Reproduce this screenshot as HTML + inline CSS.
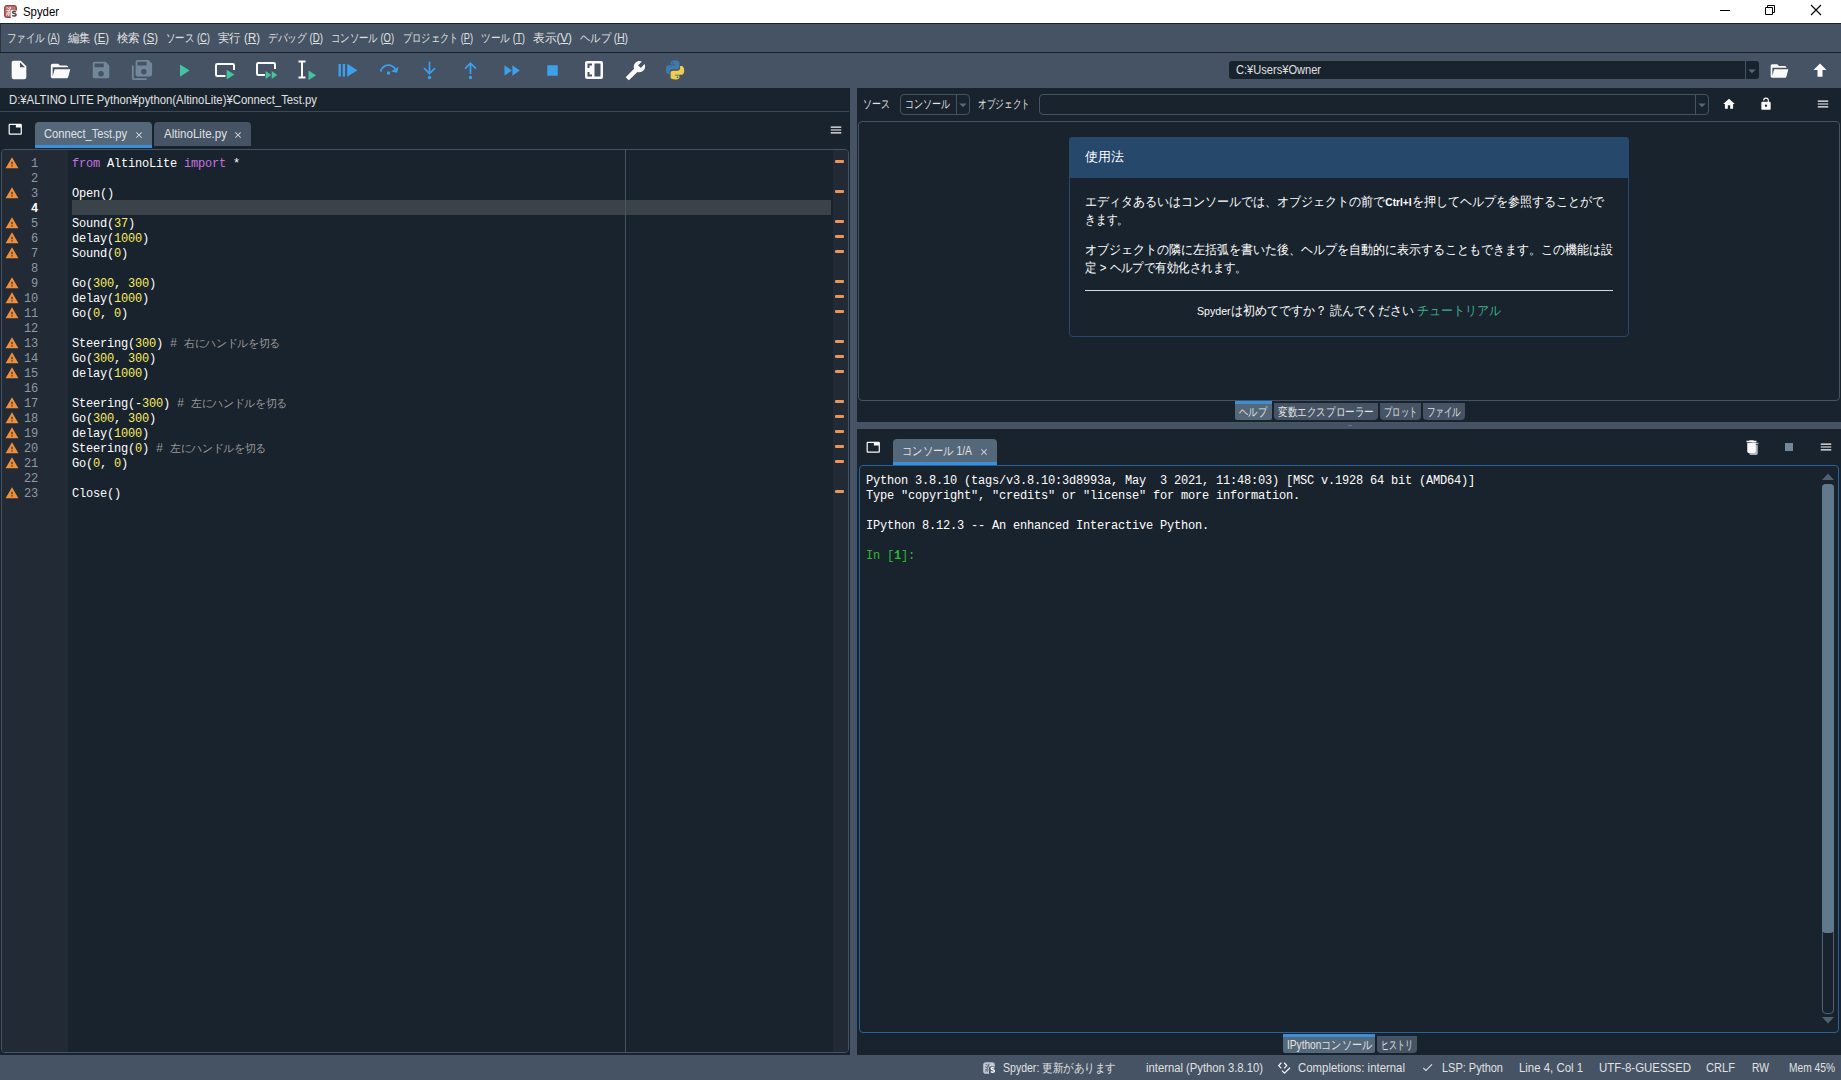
<!DOCTYPE html>
<html lang="ja"><head><meta charset="utf-8"><title>Spyder</title>
<style>
html,body{margin:0;padding:0}
body{width:1841px;height:1080px;overflow:hidden;position:relative;background:#19232D;font-family:"Liberation Sans",sans-serif;font-size:12px;color:#E0E1E3}
div,span{box-sizing:border-box}
.a{position:absolute}
.t{position:absolute;white-space:nowrap;line-height:16px;height:16px;transform-origin:0 50%}
.mono{font-family:"Liberation Mono",monospace}
.code{position:absolute;white-space:pre;font-family:"Liberation Mono",monospace;font-size:12px;letter-spacing:-0.2px;line-height:15px;height:15px;color:#fff}
.k{color:#C670E0}.n{color:#FAED5C}.cm{color:#999999}.c{color:#999999;font-family:"Liberation Sans",sans-serif;font-size:11px;letter-spacing:-0.35px;line-height:0}
.ln{position:absolute;left:2px;width:36px;text-align:right;font-family:"Liberation Mono",monospace;font-size:12px;letter-spacing:-0.2px;line-height:15px;height:15px;color:#8F99A3}
.u{text-decoration:underline}
</style></head><body>

<div class="a" style="left:0;top:0;width:1841px;height:23px;background:#fff"></div>
<svg style="position:absolute;left:4px;top:5px" width="13" height="13" viewBox="0 0 13 13" ><rect x="0.7" y="0.7" width="11.600" height="11.600" rx="2.400" fill="#BD7474" stroke="#974545" stroke-width="1.300"/><path d="M2.6 2.2l2 1.300 2.400-1.500M2.300 5.200l2 .8L6.800 3M2.400 8.300l2-.6 1.400-3.200M4.400 11l1.200-3.700M2 10.400l2.600-2.400" stroke="#FBEFEF" stroke-width="0.9" fill="none"/><rect x="6.6" y="5.200" width="6.4" height="7.800" rx="1" fill="#fff"/><path d="M11.900 6.900c-1-.9-3.400-.7-3.300.6.100 1.400 3.500.7 3.500 2.300 0 1.500-2.800 1.600-3.800.5" stroke="#454545" stroke-width="1.500" fill="none"/></svg>
<div class="t" style="transform:scaleX(0.947);left:23px;top:4px;font-size:12px;color:#000">Spyder</div>
<svg style="position:absolute;left:1717px;top:2px" width="16" height="16" viewBox="0 0 16 16" ><path d="M3 8.5h10" stroke="#000" stroke-width="1"/></svg>
<svg style="position:absolute;left:1762px;top:2px" width="16" height="16" viewBox="0 0 16 16" ><path d="M3.500 5.500h7v7h-7z M5.500 5.500v-2h7v7h-2" stroke="#000" stroke-width="1" fill="none"/></svg>
<svg style="position:absolute;left:1808px;top:2px" width="16" height="16" viewBox="0 0 16 16" ><path d="M3 3l10 10M13 3L3 13" stroke="#000" stroke-width="1.1"/></svg>
<div class="a" style="left:0;top:24px;width:1841px;height:28px;background:#455364"></div>
<div class="a" style="left:0;top:24px;width:1px;height:28px;background:#2B3643"></div>
<div class="t" style="transform:scaleX(0.787);left:7px;top:30px">ファイル (<span class="u">A</span>)</div>
<div class="t" style="transform:scaleX(0.946);left:68px;top:30px">編集 (<span class="u">E</span>)</div>
<div class="t" style="transform:scaleX(0.946);left:117px;top:30px">検索 (<span class="u">S</span>)</div>
<div class="t" style="transform:scaleX(0.785);left:166px;top:30px">ソース (<span class="u">C</span>)</div>
<div class="t" style="transform:scaleX(0.954);left:218px;top:30px">実行 (<span class="u">R</span>)</div>
<div class="t" style="transform:scaleX(0.809);left:268px;top:30px">デバッグ (<span class="u">D</span>)</div>
<div class="t" style="transform:scaleX(0.781);left:331px;top:30px">コンソール (<span class="u">O</span>)</div>
<div class="t" style="transform:scaleX(0.766);left:403px;top:30px">プロジェクト (<span class="u">P</span>)</div>
<div class="t" style="transform:scaleX(0.805);left:481px;top:30px">ツール (<span class="u">T</span>)</div>
<div class="t" style="transform:scaleX(0.975);left:533px;top:30px">表示(<span class="u">V</span>)</div>
<div class="t" style="transform:scaleX(0.857);left:580px;top:30px">ヘルプ (<span class="u">H</span>)</div>
<div class="a" style="left:0;top:53px;width:1841px;height:35px;background:#455364"></div>
<svg style="position:absolute;left:8.0px;top:59.0px" width="22" height="22" viewBox="0 0 24 24" ><path fill="#FAFAFA" d="M13,9V3.5L18.5,9M6,2C4.89,2 4,2.89 4,4V20A2,2 0 0,0 6,22H18A2,2 0 0,0 20,20V8L14,2H6Z"/></svg>
<svg style="position:absolute;left:49.0px;top:59.5px" width="22" height="22" viewBox="0 0 24 24" ><path fill="#FAFAFA" d="M19,20H4C2.89,20 2,19.1 2,18V6C2,4.89 2.89,4 4,4H10L12,6H19A2,2 0 0,1 21,8H21L4,8V18L6.14,10H23.21L20.93,18.5C20.7,19.37 19.92,20 19,20Z"/></svg>
<svg style="position:absolute;left:90.0px;top:59.0px" width="22" height="22" viewBox="0 0 24 24" ><path fill="#73879B" d="M15,9H5V5H15M12,19A3,3 0 0,1 9,16A3,3 0 0,1 12,13A3,3 0 0,1 15,16A3,3 0 0,1 12,19M17,3H5C3.89,3 3,3.9 3,5V19A2,2 0 0,0 5,21H19A2,2 0 0,0 21,19V7L17,3Z"/></svg>
<svg style="position:absolute;left:131.0px;top:59.0px" width="22" height="22" viewBox="0 0 24 24" ><path fill="#73879B" d="M17,7V3H7V7H17M14,17A3,3 0 0,0 17,14A3,3 0 0,0 14,11A3,3 0 0,0 11,14A3,3 0 0,0 14,17M19,1L23,5V17A2,2 0 0,1 21,19H7C5.89,19 5,18.1 5,17V3A2,2 0 0,1 7,1H19M1,7H3V21H17V23H3A2,2 0 0,1 1,21V7Z"/></svg>
<svg style="position:absolute;left:172.8px;top:59.7px" width="21" height="21" viewBox="0 0 24 24" ><path fill="#44C3A1" d="M8,5.14V19.14L19,12.14L8,5.14Z"/></svg>
<svg style="position:absolute;left:212px;top:58px" width="24" height="24" viewBox="0 0 24 24" ><path d="M13.500 18H5.300a1.300 1.300 0 0 1-1.300-1.300V7.300A1.300 1.300 0 0 1 5.300 6H20.700A1.300 1.300 0 0 1 22 7.300V12" stroke="#FAFAFA" stroke-width="2" fill="none"/></svg>
<svg style="position:absolute;left:221.3px;top:66.4px" width="17" height="17" viewBox="0 0 24 24" ><path fill="#44C3A1" stroke="#455364" stroke-width="2.400" paint-order="stroke" d="M8,5.14V19.14L19,12.14L8,5.14Z"/></svg>
<svg style="position:absolute;left:253px;top:57px" width="24" height="24" viewBox="0 0 24 24" ><path d="M13.500 18H5.300a1.300 1.300 0 0 1-1.300-1.300V7.300A1.300 1.300 0 0 1 5.300 6H20.700A1.300 1.300 0 0 1 22 7.300V12" stroke="#FAFAFA" stroke-width="2" fill="none"/></svg>
<svg style="position:absolute;left:262.8px;top:67.4px" width="16" height="16" viewBox="0 0 24 24" ><path fill="#44C3A1" stroke="#455364" stroke-width="2.400" paint-order="stroke" d="M13,6V18L21.5,12M4,18L12.5,12L4,6V18Z"/></svg>
<svg style="position:absolute;left:294px;top:58px" width="24" height="24" viewBox="0 0 24 24" ><path d="M4.500 3.500h7M4.500 19.500h7M8 3.500v16" stroke="#FAFAFA" stroke-width="2" fill="none"/></svg>
<svg style="position:absolute;left:302.5px;top:67px" width="16.5" height="16.5" viewBox="0 0 24 24" ><path fill="#44C3A1" d="M8,5.14V19.14L19,12.14L8,5.14Z"/></svg>
<svg style="position:absolute;left:336px;top:58px" width="24" height="24" viewBox="0 0 24 24" ><path fill="#3EA0EA" d="M2.500 6h2.400v12.500h-2.400zM6.700 6h2.400v12.500h-2.400zM11.200 5.800V18.700L21.500 12.250z"/></svg>
<svg style="position:absolute;left:378.0px;top:58.5px" width="21" height="21" viewBox="0 0 24 24" ><path fill="#3EA0EA" d="M12,14A2,2 0 0,1 14,16A2,2 0 0,1 12,18A2,2 0 0,1 10,16A2,2 0 0,1 12,14M23.46,8.86L21.87,15.75L15,14.16L18.8,11.78C17.39,9.5 14.87,8 12,8C8.05,8 4.77,10.86 4.12,14.63L2.15,14.28C2.96,9.58 7.06,6 12,6C15.58,6 18.73,7.89 20.5,10.72L23.46,8.86Z"/></svg>
<svg style="position:absolute;left:418.5px;top:59.5px" width="21" height="21" viewBox="0 0 24 24" ><path fill="#3EA0EA" d="M12,22A2,2 0 0,1 10,20A2,2 0 0,1 12,18A2,2 0 0,1 14,20A2,2 0 0,1 12,22M13,2V13L17.5,8.5L18.92,9.92L12,16.84L5.08,9.92L6.5,8.5L11,13V2H13Z"/></svg>
<svg style="position:absolute;left:459.5px;top:59.5px" width="21" height="21" viewBox="0 0 24 24" ><path fill="#3EA0EA" d="M12,22A2,2 0 0,1 10,20A2,2 0 0,1 12,18A2,2 0 0,1 14,20A2,2 0 0,1 12,22M13,16H11V6L6.5,10.5L5.08,9.08L12,2.16L18.92,9.08L17.5,10.5L13,6V16Z"/></svg>
<svg style="position:absolute;left:500.5px;top:59.5px" width="21" height="21" viewBox="0 0 24 24" ><path fill="#3EA0EA" d="M13,6V18L21.5,12M4,18L12.5,12L4,6V18Z"/></svg>
<svg style="position:absolute;left:541.5px;top:59.5px" width="21" height="21" viewBox="0 0 24 24" ><path fill="#3EA0EA" d="M18,18H6V6H18V18Z"/></svg>
<svg style="position:absolute;left:584px;top:60px" width="20" height="20" viewBox="0 0 20 20" ><rect x="1" y="1" width="18" height="18" rx="2" fill="#FAFAFA"/><rect x="10.500" y="3.500" width="6" height="13" fill="#455364"/><path d="M8 4.500H4.500V8M4.500 12v3.500H8" stroke="#455364" stroke-width="2" fill="none"/></svg>
<svg style="position:absolute;left:624.5px;top:59.5px" width="21" height="21" viewBox="0 0 24 24" ><path transform="translate(24 0) scale(-1 1)" fill="#FAFAFA" d="M22.7,19L13.6,9.9C14.5,7.6 14,4.9 12.1,3C10.1,1 7.1,0.6 4.7,1.7L9,6L6,9L1.6,4.7C0.4,7.1 0.9,10.1 2.9,12.1C4.8,14 7.5,14.5 9.8,13.6L18.9,22.7C19.3,23.1 19.9,23.1 20.3,22.7L22.6,20.4C23.1,20 23.1,19.3 22.7,19Z"/></svg>
<svg style="position:absolute;left:664px;top:59px" width="22" height="22" viewBox="0 0 22 22" ><path fill="#3F7BAA" d="M10.900 1.500c-4.600 0-4.300 2-4.300 2v2.100h4.400v.6H4.800S1.800 5.900 1.800 10.600s2.600 4.500 2.600 4.500h1.500v-2.200s-.1-2.600 2.600-2.600h4.400s2.500 0 2.500-2.400V3.900s.4-2.400-4.500-2.400zM8.500 2.900a.8.800 0 1 1 0 1.600.8.800 0 0 1 0-1.600z"/><path fill="#EFCB4E" d="M11.100 20.500c4.600 0 4.300-2 4.300-2v-2.100H11v-.6h6.200s3 .3 3-4.400-2.600-4.500-2.600-4.500h-1.500v2.200s.1 2.600-2.600 2.600H9.100s-2.500 0-2.500 2.400v4s-.4 2.400 4.500 2.400zm2.400-1.400a.8.800 0 1 1 0-1.600.8.800 0 0 1 0 1.600z"/></svg>
<div class="a" style="left:1229px;top:61px;width:530px;height:18px;background:#19232D;border-radius:3px"></div>
<div class="a" style="left:1745px;top:61px;width:1px;height:18px;background:#455364"></div>
<svg style="position:absolute;left:1743.0px;top:61.5px" width="18" height="18" viewBox="0 0 24 24" ><path fill="#54687A" d="M7,10L12,15L17,10H7Z"/></svg>
<div class="t" style="transform:scaleX(0.924);left:1236px;top:62px">C:¥Users¥Owner</div>
<svg style="position:absolute;left:1769.0px;top:60.5px" width="20" height="20" viewBox="0 0 24 24" ><path fill="#FAFAFA" d="M19,20H4C2.89,20 2,19.1 2,18V6C2,4.89 2.89,4 4,4H10L12,6H19A2,2 0 0,1 21,8H21L4,8V18L6.14,10H23.21L20.93,18.5C20.7,19.37 19.92,20 19,20Z"/></svg>
<svg style="position:absolute;left:1809.5px;top:60.0px" width="20" height="20" viewBox="0 0 24 24" ><path fill="#FAFAFA" d="M15,20H9V12H4.16L12,4.16L19.84,12H15V20Z"/></svg>
<div class="t" style="transform:scaleX(0.943);left:9px;top:92px">D:¥ALTINO LITE Python¥python(AltinoLite)¥Connect_Test.py</div>
<div class="a" style="left:0;top:111px;width:849px;height:1px;background:#3C4856"></div>
<svg style="position:absolute;left:8.25px;top:122.25px" width="14.5" height="14.5" viewBox="0 0 24 24" ><path fill="#FAFAFA" d="M21,3H3A2,2 0 0,0 1,5V19A2,2 0 0,0 3,21H21A2,2 0 0,0 23,19V5A2,2 0 0,0 21,3M21,19H3V5H13V9H21V19Z"/></svg>
<div class="a" style="left:35px;top:122px;width:117px;height:26px;background:#54687A;border-radius:4px 4px 0 0;border-bottom:3px solid #3A8FD6"></div>
<div class="t" style="transform:scaleX(0.929);left:44px;top:126px">Connect_Test.py</div>
<svg style="position:absolute;left:133.5px;top:129.5px" width="10" height="10" viewBox="0 0 24 24" ><path fill="#E0E1E3" d="M19,6.41L17.59,5L12,10.59L6.41,5L5,6.41L10.59,12L5,17.59L6.41,19L12,13.41L17.59,19L19,17.59L13.41,12L19,6.41Z"/></svg>
<div class="a" style="left:154px;top:122px;width:97px;height:24px;background:#455364;border-radius:4px 4px 0 0"></div>
<div class="t" style="transform:scaleX(0.964);left:164px;top:126px">AltinoLite.py</div>
<svg style="position:absolute;left:232.5px;top:129.5px" width="10" height="10" viewBox="0 0 24 24" ><path fill="#E0E1E3" d="M19,6.41L17.59,5L12,10.59L6.41,5L5,6.41L10.59,12L5,17.59L6.41,19L12,13.41L17.59,19L19,17.59L13.41,12L19,6.41Z"/></svg>
<svg style="position:absolute;left:828.5px;top:122.5px" width="14" height="14" viewBox="0 0 24 24" ><path fill="#FAFAFA" d="M3,6H21V8H3V6M3,11H21V13H3V11M3,16H21V18H3V16Z"/></svg>
<div class="a" style="left:1px;top:149px;width:848px;height:904px;border:1px solid #455364;border-radius:4px;background:#19232D"></div>
<div class="a" style="left:2px;top:150px;width:66px;height:902px;background:#222B35;border-radius:3px 0 0 3px"></div>
<div class="a" style="left:833px;top:150px;width:15px;height:902px;background:#222B35;border-radius:0 3px 3px 0"></div>
<div class="a" style="left:72px;top:200px;width:759px;height:15px;background:#3A424A"></div>
<div class="a" style="left:625px;top:150px;width:1px;height:902px;background:#465363"></div>
<div class="ln" style="top:157px">1</div>
<svg style="position:absolute;left:5.0px;top:155.5px" width="14" height="14" viewBox="0 0 24 24" ><path fill="#EE8E3B" d="M13,14H11V10H13M13,18H11V16H13M1,21H23L12,2L1,21Z"/></svg>
<div class="code" style="left:72px;top:157px"><span class="k">from</span> AltinoLite <span class="k">import</span> *</div>
<div class="a" style="left:835px;top:160px;width:9px;height:3px;background:#E8945A;border-radius:1px"></div>
<div class="ln" style="top:172px">2</div>
<div class="ln" style="top:187px">3</div>
<svg style="position:absolute;left:5.0px;top:185.5px" width="14" height="14" viewBox="0 0 24 24" ><path fill="#EE8E3B" d="M13,14H11V10H13M13,18H11V16H13M1,21H23L12,2L1,21Z"/></svg>
<div class="code" style="left:72px;top:187px">Open()</div>
<div class="a" style="left:835px;top:190px;width:9px;height:3px;background:#E8945A;border-radius:1px"></div>
<div class="ln" style="top:202px;color:#fff;font-weight:bold">4</div>
<div class="ln" style="top:217px">5</div>
<svg style="position:absolute;left:5.0px;top:215.5px" width="14" height="14" viewBox="0 0 24 24" ><path fill="#EE8E3B" d="M13,14H11V10H13M13,18H11V16H13M1,21H23L12,2L1,21Z"/></svg>
<div class="code" style="left:72px;top:217px">Sound(<span class="n">37</span>)</div>
<div class="a" style="left:835px;top:220px;width:9px;height:3px;background:#E8945A;border-radius:1px"></div>
<div class="ln" style="top:232px">6</div>
<svg style="position:absolute;left:5.0px;top:230.5px" width="14" height="14" viewBox="0 0 24 24" ><path fill="#EE8E3B" d="M13,14H11V10H13M13,18H11V16H13M1,21H23L12,2L1,21Z"/></svg>
<div class="code" style="left:72px;top:232px">delay(<span class="n">1000</span>)</div>
<div class="a" style="left:835px;top:235px;width:9px;height:3px;background:#E8945A;border-radius:1px"></div>
<div class="ln" style="top:247px">7</div>
<svg style="position:absolute;left:5.0px;top:245.5px" width="14" height="14" viewBox="0 0 24 24" ><path fill="#EE8E3B" d="M13,14H11V10H13M13,18H11V16H13M1,21H23L12,2L1,21Z"/></svg>
<div class="code" style="left:72px;top:247px">Sound(<span class="n">0</span>)</div>
<div class="a" style="left:835px;top:250px;width:9px;height:3px;background:#E8945A;border-radius:1px"></div>
<div class="ln" style="top:262px">8</div>
<div class="ln" style="top:277px">9</div>
<svg style="position:absolute;left:5.0px;top:275.5px" width="14" height="14" viewBox="0 0 24 24" ><path fill="#EE8E3B" d="M13,14H11V10H13M13,18H11V16H13M1,21H23L12,2L1,21Z"/></svg>
<div class="code" style="left:72px;top:277px">Go(<span class="n">300</span>, <span class="n">300</span>)</div>
<div class="a" style="left:835px;top:280px;width:9px;height:3px;background:#E8945A;border-radius:1px"></div>
<div class="ln" style="top:292px">10</div>
<svg style="position:absolute;left:5.0px;top:290.5px" width="14" height="14" viewBox="0 0 24 24" ><path fill="#EE8E3B" d="M13,14H11V10H13M13,18H11V16H13M1,21H23L12,2L1,21Z"/></svg>
<div class="code" style="left:72px;top:292px">delay(<span class="n">1000</span>)</div>
<div class="a" style="left:835px;top:295px;width:9px;height:3px;background:#E8945A;border-radius:1px"></div>
<div class="ln" style="top:307px">11</div>
<svg style="position:absolute;left:5.0px;top:305.5px" width="14" height="14" viewBox="0 0 24 24" ><path fill="#EE8E3B" d="M13,14H11V10H13M13,18H11V16H13M1,21H23L12,2L1,21Z"/></svg>
<div class="code" style="left:72px;top:307px">Go(<span class="n">0</span>, <span class="n">0</span>)</div>
<div class="a" style="left:835px;top:310px;width:9px;height:3px;background:#E8945A;border-radius:1px"></div>
<div class="ln" style="top:322px">12</div>
<div class="ln" style="top:337px">13</div>
<svg style="position:absolute;left:5.0px;top:335.5px" width="14" height="14" viewBox="0 0 24 24" ><path fill="#EE8E3B" d="M13,14H11V10H13M13,18H11V16H13M1,21H23L12,2L1,21Z"/></svg>
<div class="code" style="left:72px;top:337px">Steering(<span class="n">300</span>) <span class="cm"># </span><span class="c">右にハンドルを切る</span></div>
<div class="a" style="left:835px;top:340px;width:9px;height:3px;background:#E8945A;border-radius:1px"></div>
<div class="ln" style="top:352px">14</div>
<svg style="position:absolute;left:5.0px;top:350.5px" width="14" height="14" viewBox="0 0 24 24" ><path fill="#EE8E3B" d="M13,14H11V10H13M13,18H11V16H13M1,21H23L12,2L1,21Z"/></svg>
<div class="code" style="left:72px;top:352px">Go(<span class="n">300</span>, <span class="n">300</span>)</div>
<div class="a" style="left:835px;top:355px;width:9px;height:3px;background:#E8945A;border-radius:1px"></div>
<div class="ln" style="top:367px">15</div>
<svg style="position:absolute;left:5.0px;top:365.5px" width="14" height="14" viewBox="0 0 24 24" ><path fill="#EE8E3B" d="M13,14H11V10H13M13,18H11V16H13M1,21H23L12,2L1,21Z"/></svg>
<div class="code" style="left:72px;top:367px">delay(<span class="n">1000</span>)</div>
<div class="a" style="left:835px;top:370px;width:9px;height:3px;background:#E8945A;border-radius:1px"></div>
<div class="ln" style="top:382px">16</div>
<div class="ln" style="top:397px">17</div>
<svg style="position:absolute;left:5.0px;top:395.5px" width="14" height="14" viewBox="0 0 24 24" ><path fill="#EE8E3B" d="M13,14H11V10H13M13,18H11V16H13M1,21H23L12,2L1,21Z"/></svg>
<div class="code" style="left:72px;top:397px">Steering(-<span class="n">300</span>) <span class="cm"># </span><span class="c">左にハンドルを切る</span></div>
<div class="a" style="left:835px;top:400px;width:9px;height:3px;background:#E8945A;border-radius:1px"></div>
<div class="ln" style="top:412px">18</div>
<svg style="position:absolute;left:5.0px;top:410.5px" width="14" height="14" viewBox="0 0 24 24" ><path fill="#EE8E3B" d="M13,14H11V10H13M13,18H11V16H13M1,21H23L12,2L1,21Z"/></svg>
<div class="code" style="left:72px;top:412px">Go(<span class="n">300</span>, <span class="n">300</span>)</div>
<div class="a" style="left:835px;top:415px;width:9px;height:3px;background:#E8945A;border-radius:1px"></div>
<div class="ln" style="top:427px">19</div>
<svg style="position:absolute;left:5.0px;top:425.5px" width="14" height="14" viewBox="0 0 24 24" ><path fill="#EE8E3B" d="M13,14H11V10H13M13,18H11V16H13M1,21H23L12,2L1,21Z"/></svg>
<div class="code" style="left:72px;top:427px">delay(<span class="n">1000</span>)</div>
<div class="a" style="left:835px;top:430px;width:9px;height:3px;background:#E8945A;border-radius:1px"></div>
<div class="ln" style="top:442px">20</div>
<svg style="position:absolute;left:5.0px;top:440.5px" width="14" height="14" viewBox="0 0 24 24" ><path fill="#EE8E3B" d="M13,14H11V10H13M13,18H11V16H13M1,21H23L12,2L1,21Z"/></svg>
<div class="code" style="left:72px;top:442px">Steering(<span class="n">0</span>) <span class="cm"># </span><span class="c">左にハンドルを切る</span></div>
<div class="a" style="left:835px;top:445px;width:9px;height:3px;background:#E8945A;border-radius:1px"></div>
<div class="ln" style="top:457px">21</div>
<svg style="position:absolute;left:5.0px;top:455.5px" width="14" height="14" viewBox="0 0 24 24" ><path fill="#EE8E3B" d="M13,14H11V10H13M13,18H11V16H13M1,21H23L12,2L1,21Z"/></svg>
<div class="code" style="left:72px;top:457px">Go(<span class="n">0</span>, <span class="n">0</span>)</div>
<div class="a" style="left:835px;top:460px;width:9px;height:3px;background:#E8945A;border-radius:1px"></div>
<div class="ln" style="top:472px">22</div>
<div class="ln" style="top:487px">23</div>
<svg style="position:absolute;left:5.0px;top:485.5px" width="14" height="14" viewBox="0 0 24 24" ><path fill="#EE8E3B" d="M13,14H11V10H13M13,18H11V16H13M1,21H23L12,2L1,21Z"/></svg>
<div class="code" style="left:72px;top:487px">Close()</div>
<div class="a" style="left:835px;top:490px;width:9px;height:3px;background:#E8945A;border-radius:1px"></div>
<div class="a" style="left:850px;top:88px;width:7px;height:967px;background:#455364"></div>
<div class="a" style="left:857px;top:422px;width:984px;height:7px;background:#455364"></div>
<div class="a" style="left:1348px;top:425px;width:4px;height:1px;background:#60798B"></div>
<div class="t" style="transform:scaleX(0.750);left:863px;top:96px">ソース</div>
<div class="a" style="left:900px;top:94px;width:70px;height:21px;border:1px solid #455364;border-radius:4px"></div>
<div class="a" style="left:956px;top:95px;width:1px;height:19px;background:#455364"></div>
<div class="t" style="transform:scaleX(0.750);left:905px;top:96px">コンソール</div>
<svg style="position:absolute;left:954.0px;top:95.5px" width="18" height="18" viewBox="0 0 24 24" ><path fill="#54687A" d="M7,10L12,15L17,10H7Z"/></svg>
<div class="t" style="transform:scaleX(0.722);left:978px;top:96px">オブジェクト</div>
<div class="a" style="left:1039px;top:94px;width:670px;height:21px;border:1px solid #455364;border-radius:4px"></div>
<div class="a" style="left:1695px;top:95px;width:1px;height:19px;background:#455364"></div>
<svg style="position:absolute;left:1693.0px;top:95.5px" width="18" height="18" viewBox="0 0 24 24" ><path fill="#54687A" d="M7,10L12,15L17,10H7Z"/></svg>
<svg style="position:absolute;left:1722.0px;top:96.5px" width="14" height="14" viewBox="0 0 24 24" ><path fill="#FAFAFA" d="M10,20V14H14V20H19V12H22L12,3L2,12H5V20H10Z"/></svg>
<svg style="position:absolute;left:1759.0px;top:96.5px" width="14" height="14" viewBox="0 0 24 24" ><path fill="#FAFAFA" d="M18,8A2,2 0 0,1 20,10V20A2,2 0 0,1 18,22H6C4.89,22 4,21.1 4,20V10A2,2 0 0,1 6,8H15V6A3,3 0 0,0 12,3A3,3 0 0,0 9,6H7A5,5 0 0,1 12,1A5,5 0 0,1 17,6V8H18M12,17A2,2 0 0,0 14,15A2,2 0 0,0 12,13A2,2 0 0,0 10,15A2,2 0 0,0 12,17Z"/></svg>
<svg style="position:absolute;left:1816.0px;top:96.5px" width="14" height="14" viewBox="0 0 24 24" ><path fill="#FAFAFA" d="M3,6H21V8H3V6M3,11H21V13H3V11M3,16H21V18H3V16Z"/></svg>
<div class="a" style="left:858px;top:121px;width:982px;height:280px;border:1px solid #455364;border-radius:4px"></div>
<div class="a" style="left:1069px;top:137px;width:560px;height:200px;border:1px solid #26486B;border-radius:4px;background:#19232D"></div>
<div class="a" style="left:1069px;top:137px;width:560px;height:41px;background:#26486B;border-radius:4px 4px 0 0"></div>
<div class="t" style="transform:scaleX(1.000);left:1085px;top:149px;font-size:13px;color:#fff">使用法</div>
<div class="t" style="transform:scaleX(0.924);left:1085px;top:194px;font-size:13px;color:#fff">エディタあるいはコンソールでは、オブジェクトの前で<b style="font-size:11px">Ctrl+I</b>を押してヘルプを参照することがで</div>
<div class="t" style="transform:scaleX(0.827);left:1085px;top:212px;font-size:13px;color:#fff">きます。</div>
<div class="t" style="transform:scaleX(0.923);left:1085px;top:242px;font-size:13px;color:#fff">オブジェクトの隣に左括弧を書いた後、ヘルプを自動的に表示することもできます。この機能は設</div>
<div class="t" style="transform:scaleX(0.881);left:1085px;top:260px;font-size:13px;color:#fff">定 &gt; ヘルプで有効化されます。</div>
<div class="a" style="left:1085px;top:290px;width:528px;height:1px;background:#D6DADE"></div>
<div class="t" style="transform:scaleX(0.923);left:1197px;top:303px;font-size:12.500px;color:#fff"><span style="font-size:11.500px">Spyder</span>は初めてですか？ 読んでください <span style="color:#3DB08A">チュートリアル</span></div>
<div class="a" style="left:1235px;top:400.5px;width:37px;height:19.5px;background:#54687A;border-top:3px solid #3A8FD6;border-radius:0 0 2px 2px"></div>
<div class="t" style="transform:scaleX(0.778);left:1239px;top:404px">ヘルプ</div>
<div class="a" style="left:1274px;top:403px;width:104px;height:17px;background:#455364;border-radius:0 0 4px 4px"></div>
<div class="t" style="transform:scaleX(0.800);left:1278px;top:404px">変数エクスプローラー</div>
<div class="a" style="left:1380px;top:403px;width:41px;height:17px;background:#455364;border-radius:0 0 4px 4px"></div>
<div class="t" style="transform:scaleX(0.688);left:1384px;top:404px">プロット</div>
<div class="a" style="left:1423px;top:403px;width:42px;height:17px;background:#455364;border-radius:0 0 4px 4px"></div>
<div class="t" style="transform:scaleX(0.708);left:1427px;top:404px">ファイル</div>
<svg style="position:absolute;left:866.25px;top:440.25px" width="14.5" height="14.5" viewBox="0 0 24 24" ><path fill="#FAFAFA" d="M21,3H3A2,2 0 0,0 1,5V19A2,2 0 0,0 3,21H21A2,2 0 0,0 23,19V5A2,2 0 0,0 21,3M21,19H3V5H13V9H21V19Z"/></svg>
<div class="a" style="left:893px;top:439px;width:104px;height:26px;background:#54687A;border-radius:4px 4px 0 0;border-bottom:3px solid #3A8FD6"></div>
<div class="t" style="transform:scaleX(0.860);left:902px;top:443px">コンソール 1/A</div>
<svg style="position:absolute;left:979.0px;top:446.5px" width="10" height="10" viewBox="0 0 24 24" ><path fill="#E0E1E3" d="M19,6.41L17.59,5L12,10.59L6.41,5L5,6.41L10.59,12L5,17.59L6.41,19L12,13.41L17.59,19L19,17.59L13.41,12L19,6.41Z"/></svg>
<svg style="position:absolute;left:1744.5px;top:439.5px" width="17" height="17" viewBox="0 0 24 24" ><path fill="#AEB6BF" d="M19,4H15.5L14.5,3H9.5L8.5,4H5V6H19M6,19A2,2 0 0,0 8,21H16A2,2 0 0,0 18,19V7H6V19Z"/></svg>
<svg style="position:absolute;left:1743.0px;top:438.0px" width="17" height="17" viewBox="0 0 24 24" ><path fill="#FAFAFA" d="M19,4H15.5L14.5,3H9.5L8.5,4H5V6H19M6,19A2,2 0 0,0 8,21H16A2,2 0 0,0 18,19V7H6V19Z"/></svg>
<div class="a" style="left:1785px;top:443px;width:8px;height:8px;background:#73879B"></div>
<svg style="position:absolute;left:1819.0px;top:440.0px" width="14" height="14" viewBox="0 0 24 24" ><path fill="#FAFAFA" d="M3,6H21V8H3V6M3,11H21V13H3V11M3,16H21V18H3V16Z"/></svg>
<div class="a" style="left:859px;top:465px;width:980px;height:568px;border:1px solid #25639A;border-radius:4px"></div>
<div class="code" style="left:866px;top:474px;color:#fff">Python 3.8.10 (tags/v3.8.10:3d8993a, May  3 2021, 11:48:03) [MSC v.1928 64 bit (AMD64)]</div>
<div class="code" style="left:866px;top:489px;color:#fff">Type "copyright", "credits" or "license" for more information.</div>
<div class="code" style="left:866px;top:519px;color:#fff">IPython 8.12.3 -- An enhanced Interactive Python.</div>
<div class="code" style="left:866px;top:549px;color:#fff"><span style="color:#2FB62F">In [<b>1</b>]:</span></div>
<svg style="position:absolute;left:1822px;top:473px" width="12" height="7" viewBox="0 0 12 7" ><path d="M0 7L6 0.500 12 7z" fill="#4F6072"/></svg>
<div class="a" style="left:1822px;top:484px;width:12px;height:530px;border:1px solid #506073;border-radius:4px"></div>
<div class="a" style="left:1822px;top:484px;width:12px;height:449px;background:#60798B;border-radius:4px"></div>
<svg style="position:absolute;left:1822px;top:1017px" width="12" height="7" viewBox="0 0 12 7" ><path d="M0 0L6 6.500 12 0z" fill="#4F6072"/></svg>
<div class="a" style="left:1283px;top:1034px;width:92px;height:19px;background:#54687A;border-top:3px solid #3A8FD6;border-radius:0 0 2px 2px"></div>
<div class="t" style="transform:scaleX(0.844);left:1287px;top:1037px">IPythonコンソール</div>
<div class="a" style="left:1377px;top:1036px;width:40px;height:17px;background:#455364;border-radius:0 0 4px 4px"></div>
<div class="t" style="transform:scaleX(0.667);left:1381px;top:1037px">ヒストリ</div>
<div class="a" style="left:0;top:1055px;width:1841px;height:25px;background:#455364"></div>
<svg style="position:absolute;left:983px;top:1062px" width="12" height="12" viewBox="0 0 12 12" ><rect x="0.2" y="0.2" width="11.600" height="11.600" rx="2.600" fill="#C3C9D1"/><path d="M2.400 2l1.900 1.200 2.200-1.400M2.100 4.800l1.900.7L6.300 2.800M2.200 7.700l1.900-.6 1.300-3M4.100 10.200l1.100-3.400M1.900 9.700l2.400-2.300" stroke="#56657A" stroke-width="0.900" fill="none"/><rect x="6" y="4.600" width="6" height="7.400" rx="1" fill="#455364"/><path d="M11.200 6.300c-.9-.8-3.200-.7-3.100.5.100 1.300 3.300.7 3.300 2.200 0 1.400-2.600 1.500-3.600.5" stroke="#F2F3F5" stroke-width="1.500" fill="none"/></svg>
<div class="t" style="transform:scaleX(0.878);left:1003px;top:1060px">Spyder: 更新があります</div>
<div class="t" style="transform:scaleX(0.938);left:1146px;top:1060px">internal (Python 3.8.10)</div>
<div class="t" style="transform:scaleX(0.949);left:1298px;top:1060px">Completions: internal</div>
<div class="t" style="transform:scaleX(0.914);left:1442px;top:1060px">LSP: Python</div>
<div class="t" style="transform:scaleX(0.950);left:1519px;top:1060px">Line 4, Col 1</div>
<div class="t" style="transform:scaleX(0.952);left:1599px;top:1060px">UTF-8-GUESSED</div>
<div class="t" style="transform:scaleX(0.925);left:1706px;top:1060px">CRLF</div>
<div class="t" style="transform:scaleX(0.859);left:1752px;top:1060px">RW</div>
<div class="t" style="transform:scaleX(0.851);left:1789px;top:1060px">Mem 45%</div>
<svg style="position:absolute;left:1278px;top:1062px" width="13" height="13" viewBox="0 0 13 13" ><path d="M3.300 0.800L0.800 3.600 3.300 6.400M6.200 0.800l2.500 2.800-2.500 2.800" stroke="#F0F1F3" stroke-width="1.300" fill="none"/><path d="M4 8.600l2.500 2.500 5.500-5.400" stroke="#F0F1F3" stroke-width="1.300" fill="none"/></svg>
<svg style="position:absolute;left:1420.5px;top:1061.0px" width="13" height="13" viewBox="0 0 24 24" ><path fill="#E0E1E3" d="M21,7L9,19L3.5,13.5L4.91,12.09L9,16.17L19.59,5.59L21,7Z"/></svg>
</body></html>
